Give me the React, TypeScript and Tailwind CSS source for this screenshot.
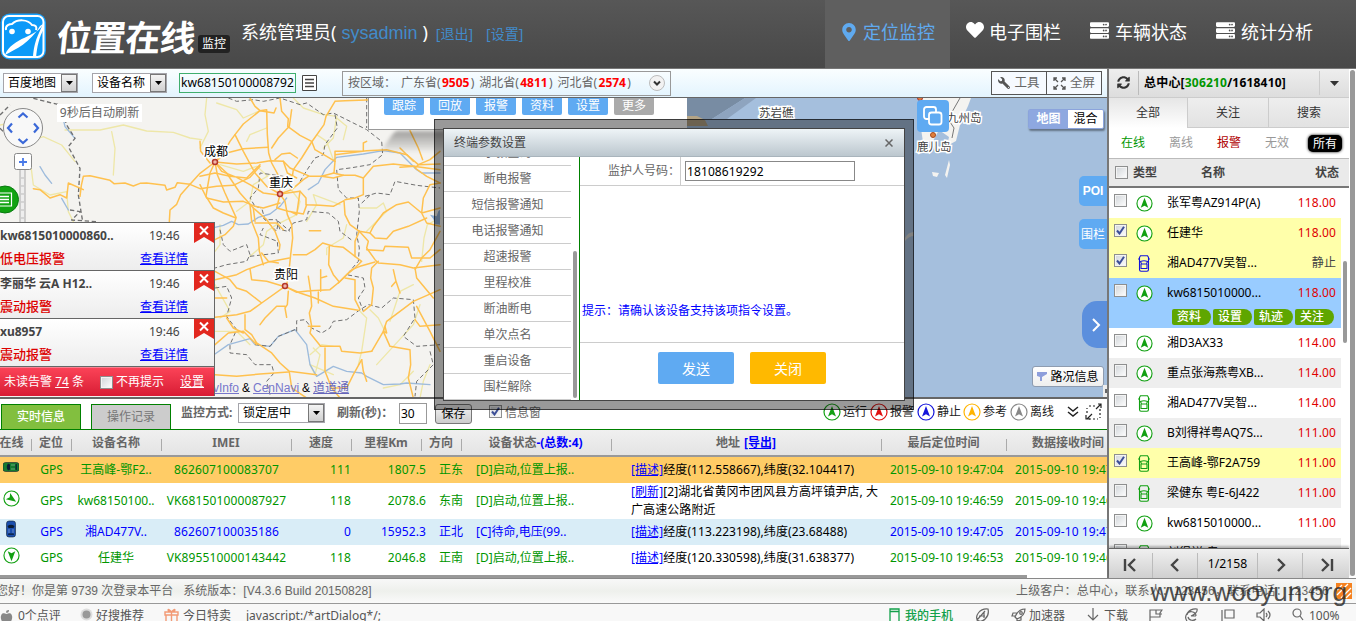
import React from "react";
import { FaMapMarkerAlt, FaHeart, FaServer, FaWrench, FaSyncAlt, FaAppleAlt } from "react-icons/fa";

const sans = "font-['Noto_Sans','Noto_Sans_CJK_SC',sans-serif]";

function DirIcon({ color, size = 17, turn = 0 }: { color: string; size?: number; turn?: number }) {
  return (
    <svg width={size} height={size} viewBox="0 0 18 18" className="block shrink-0">
      <circle cx="9" cy="9" r="8" fill="#fff" stroke={color} strokeWidth="1.2" />
      <path d="M9 3 L13 13.5 L9 11.3 L5 13.5 Z" fill={color} transform={`rotate(${turn} 9 9)`} />
    </svg>
  );
}

function CarIcon({ color }: { color: string }) {
  return (
    <svg width="12" height="17" viewBox="0 0 12 17" className="block shrink-0" fill="none" stroke={color} strokeWidth="1.1">
      <path d="M2.5 .8 h7 l1 1.7 v12 q0 1.7 -1.500 1.7 h-6 q-1.500 0 -1.500 -1.7 v-12 z" />
      <path d="M0 4h1.500M10.500 4h1.500M2.500 6.500q3.500-1.600 7 0l-1 2.500h-5zM3 9v4.500h6V9M3 13.500h6" />
    </svg>
  );
}

function Solid({ color, sideways = false }: { color: string; sideways?: boolean }) {
  return (
    <svg width="16" height="18" viewBox="0 0 16 18" className="block">
      <g transform={sideways ? "rotate(-90 8 9)" : undefined}>
        <rect x="3.500" y="1" width="9" height="16" rx="2.500" fill={color} stroke="#123" strokeWidth=".6" />
        <path d="M4.500 6q3.500-2.500 7 0l-1 2h-5zM5.500 13.500h5l.7 1.300h-6.400z" fill="#0b1c33" />
        <path d="M6 9v4M10 9v4" stroke="#fff" strokeOpacity=".5" strokeWidth=".7" />
      </g>
    </svg>
  );
}

function Check({ on = false }: { on?: boolean }) {
  return (
    <span className="flex h-[13px] w-[13px] shrink-0 items-center justify-center border border-[#8e8f8f] bg-gradient-to-br from-[#d0d4d8] to-white shadow-[inset_0_0_0_1px_#f4f4f4]">
      {on && (
        <svg width="9" height="9" viewBox="0 0 9 9" fill="none" stroke="#3c4f97" strokeWidth="2">
          <path d="M1 4.500 L3.500 7.500 L8 .8" />
        </svg>
      )}
    </span>
  );
}

function Select({ text, className = "" }: { text: string; className?: string }) {
  return (
    <div className={`flex h-5 items-center justify-between border border-[#a5a5ab] bg-white text-black ${className}`}>
      <span className="pl-1 whitespace-nowrap">{text}</span>
      <span className="flex h-[18px] w-4 items-center justify-center border border-[#777] bg-gradient-to-b from-[#f4f4f4] to-[#d0d0d0]">
        <svg width="7" height="4" viewBox="0 0 7 4"><path d="M0 0h7L3.500 4z" /></svg>
      </span>
    </div>
  );
}

function Header() {
  const nav = [
    { t: "电子围栏", i: <FaHeart size={18} />, w: "w-[125px] gap-[5px] pl-px" },
    { t: "车辆状态", i: <FaServer size={19} />, w: "w-[126px] gap-1.5" },
    { t: "统计分析", i: <FaServer size={19} />, w: "w-[125px] gap-1.5" },
  ];
  return (
    <header className="flex h-[69px] shrink-0 border-b border-[#777] bg-gradient-to-b from-[#575757] to-[#484848] text-white">
      <svg width="47" height="47" viewBox="0 0 47 47" className="mt-[13px] shrink-0">
        <rect x=".5" y=".5" width="45.500" height="46" rx="9" fill="#18a0fb" />
        <rect x="3" y="3" width="40.500" height="41" rx="6" fill="#0c9af8" stroke="#fff" strokeWidth="2" />
        <path d="M6 17c-1-5 4-6 6-6 5-5 16-5 20 1 4 0 5 2 4 5" fill="none" stroke="#fff" strokeWidth="2" />
        <circle cx="12" cy="18.500" r="2.800" fill="#fff" />
        <circle cx="28" cy="18.500" r="2.800" fill="#fff" />
        <path d="M43 11C38 24 12 24 5 42C16 36 30 30 40 13z" fill="#fff" />
        <path d="M43 10C40 20 34 26 33 45h3C37 34 39 24 44 16z" fill="#fff" />
      </svg>
      <div className="mt-[18px] ml-[9px] w-[142px] shrink-0 -skew-x-6 text-[35.500px] leading-[38px] font-bold tracking-[-1px] whitespace-nowrap">位置在线</div>
      <div className="mt-[35px] h-[18px] w-8 shrink-0 rounded-[3px] bg-[#222] text-center text-xs leading-[18px] whitespace-nowrap">监控</div>
      <div className="mt-[19px] ml-[11px] flex w-[584px] shrink-0 items-baseline text-[18px] leading-[26px] whitespace-nowrap">
        <span>系统管理员(</span>
        <span className="ml-[5px] font-['Liberation_Sans'] text-[18px] text-[#428bca]">sysadmin</span>
        <span className="ml-[5px]">)</span>
        <span className="ml-2 text-sm text-[#428bca]">[退出]</span>
        <span className="ml-[13px] text-sm text-[#428bca]">[设置]</span>
      </div>
      <nav className="flex shrink-0 text-[18px] whitespace-nowrap">
        <div className="flex w-[125px] items-center gap-[5px] bg-[#5f5f5f] pb-1 pl-[15px] text-[#5faaf0]">
          <FaMapMarkerAlt size={18} />
          <span>定位监控</span>
        </div>
        <div className="flex pl-[15px]">
          {nav.map((n) => (
            <div key={n.t} className={`flex items-center pb-1 ${n.w}`}>
              <span className="mb-1">{n.i}</span>
              <span>{n.t}</span>
            </div>
          ))}
        </div>
      </nav>
    </header>
  );
}

function Toolbar() {
  const areas = [["广东省", "9505"], ["湖北省", "4811"], ["河北省", "2574"]];
  return (
    <div className="flex h-[29px] shrink-0 items-center border-b border-[#666] bg-gradient-to-b from-[#fafeff] to-[#e3f4fe] pl-[3px] whitespace-nowrap">
      <Select text="百度地图" className="w-[75px]" />
      <Select text="设备名称" className="ml-3.5 w-[75px]" />
      <div className="ml-3 h-5 w-[117px] overflow-hidden border border-[#3fae6e] pl-px text-[12.100px] leading-[18px] text-black">kw68150100008792</div>
      <svg width="15" height="16" viewBox="0 0 15 16" className="ml-1.5" fill="none" stroke="#444">
        <path d="M.5 .5h14v15h-14z" fill="#fff" />
        <path d="M3 4.500h9M3 8h9M3 11.500h9" strokeWidth="1.600" />
      </svg>
      <div className="ml-[25px] flex h-[25px] w-[329px] items-center border border-[#999] pl-[5px] text-[#666]">
        <span className="mr-[5px] w-[48px]">按区域：</span>
        {areas.map(([n, c]) => (
          <span key={n} className="mr-[5px]">{n}(<b className="mx-[1.300px] text-[red]">{c}</b>)</span>
        ))}
        <svg width="16" height="16" viewBox="0 0 16 16" className="ml-[13px]">
          <circle cx="8" cy="8" r="7.500" fill="#f2f2f2" stroke="#bbb" />
          <path d="M5 6.500l3 3 3-3" fill="none" stroke="#333" strokeWidth="2" />
        </svg>
      </div>
      <div className="ml-auto mr-[5px] flex h-6 border border-[#555] bg-[#f6faff] text-[12.500px] text-[#666]">
        <div className="flex w-[55px] items-center justify-center gap-1 border-r border-[#555]"><FaWrench size={12} color="#555" className="-scale-x-100" />工具</div>
        <div className="flex w-[54px] items-center justify-center gap-1">
          <svg width="13" height="13" viewBox="0 0 13 13" fill="none" stroke="#555" strokeWidth="1.300">
            <path d="M1 4V1h3M9 1h3v3M12 9v3H9M4 12H1V9M1 1l4 4M12 1L8 5M12 12L8 8M1 12l4-4" />
          </svg>全屏
        </div>
      </div>
    </div>
  );
}

const roads = [
  "M-92 371L-90 336 -70 319 -58 290 -30 259 0 226 45 192",
  "M-30 259L-68 254 -75 268 -100 276 -105 262 -160 255 -180 256 -200 264 -225 255 -258 257 -270 247 -330 233 -350 235 -356 262 -360 295",
  "M-350 275L-395 255 -400 300 -420 290 -450 300 -480 275 -500 272",
  "M0 130L2 160 30 195",
  "M45 192L70 165 90 130 105 110 130 78 180 38 165 25 150 0M180 38L200 35 202 110 206 165 215 195 235 232 240 285",
  "M180 38L222 45 228 30M275 35L268 85 235 120 215 150M240 0L245 40 265 62 263 85 300 112 335 130 345 155 380 175 405 190",
  "M405 10L435 8 520 5M405 10L378 55 372 80 335 132 305 180 280 215 275 250",
  "M105 110L130 160 165 225 200 265 240 288M45 192L80 165 130 152 205 148",
  "M45 192L110 198 170 195 210 188 250 190 270 210 330 235 365 235 400 240 430 232 465 232 490 240 520 205 580 198 640 205 720 215",
  "M225 185L245 168 270 165 292 180M250 190L262 225 290 240",
  "M45 192L30 225 22 270 18 295 40 330 70 345 108 360 100 385 75 410 45 425",
  "M45 192L52 230 75 285 108 358M45 192L80 225 120 285 160 330 200 365 225 400 240 440 238 455",
  "M45 192L65 220 110 238 150 260 190 285 240 292M0 235L45 225 90 235 140 240 180 200",
  "M-30 259L0 272 50 265 100 262 150 238 180 205M0 260L20 300 70 312 130 310 165 325 190 330 240 315",
  "M150 320L155 370 175 420 178 460 190 500M165 375L230 375 250 395M160 330L165 370",
  "M240 288L255 310 262 350 275 380 278 420 272 470 268 510 260 560",
  "M240 288L300 280 318 300 318 320 360 322 400 325 432 308 435 350 450 380 478 400",
  "M240 288L275 275 310 245 325 235M240 290L230 330 265 340 310 348 320 320M300 280L290 350 270 340",
  "M405 190L405 160 490 160 490 135 500 130M405 170L500 158 560 155 620 170 655 200 720 198M405 190L402 225 365 235",
  "M600 150L640 190M630 98L655 150 668 185M720 160L690 185 655 200 645 210 680 235 720 255",
  "M490 240L490 290 465 300 435 305M400 225L430 232M645 205L600 208",
  "M510 405L520 385 550 345 590 320 625 312 665 345 720 330M665 345L670 300 690 260 720 255M665 345L680 375 720 385",
  "M328 398L362 398M478 400L510 405 525 420 560 422 580 400 625 385 680 360",
  "M280 470L320 470 345 455 368 435 400 445 430 448 465 475M268 480L205 492 140 515 110 530 45 545",
  "M235 495L205 490 185 465M478 400L465 430 465 475 485 490 465 510 440 530 415 555",
  "M388 445L386 500 400 530 418 552M478 400L505 430 500 450 525 485 535 495 600 500 640 510 720 500",
  "M500 455L550 458 555 445 625 448 635 480 690 480 720 455M535 490L515 510 512 540 520 570 515 620 490 640",
  "M255 565L185 615 150 640 110 650 45 658M185 615L140 580 110 570 90 545 45 520M150 512L155 545 200 550 250 565",
  "M255 565L300 585 345 600 400 625 475 637M265 580L262 620 255 630 260 658M255 625L230 625 195 660 180 680",
  "M255 565L290 583 330 578 390 575 418 552 455 515 480 505 525 492M325 535L332 580 335 625 328 645 335 685 330 705 362 745",
  "M362 515L362 580M362 540L380 535M355 582L355 615M325 685L360 685M435 540L465 545 465 605 480 635",
  "M580 515L588 550 575 565M588 550L600 585",
  "M135 650L135 695 155 710 170 735 215 765 240 795 268 820 350 830M45 740L85 705 130 700 170 740M45 600L80 600M80 660L100 690 130 705",
  "M45 830L110 835 180 828 265 822M268 822L275 870 320 900M362 745L420 745 425 760 480 765 515 760",
  "M375 750L375 820 395 870 420 900M485 785L460 830 440 870 400 870",
  "M515 760L550 700 560 670 600 640 640 610 720 575M550 700L570 745 630 755 632 800 625 840 640 900",
  "M550 700L560 705 555 685M645 510L650 540 700 600M650 625L690 700 720 760M645 515L665 480 690 455 720 400",
  "M720 680L660 685 645 665M485 785L490 820 500 850",
];

function MapArt() {
  return (
    <svg width="1107" height="299" viewBox="0 98 1107 299" className="block">
      <rect y="98" width="1107" height="299" fill="#f4f3f0" />
      <g transform="translate(200 98) scale(.33333)" fill="none" strokeLinejoin="round" strokeLinecap="round">
        <g stroke="#eee7a8" strokeWidth="4">
          <path d="M-405 96L-300 96 -230 81 -160 99 -80 103 -30 120 5 125M-265 101L-255 151 -260 231M-540 141L-470 116 -415 141 -375 191M-510 181L-500 261 -450 291 -400 281 -395 341 -375 381M-600 81L-540 71 -480 111" />
          <path d="M20 0L15 50 25 100 0 150M50 15L110 35 130 60 175 40M200 90L150 110 140 130M280 0L310 30 370 50 410 55 400 120 370 150M350 110L380 130 400 185" />
          <path d="M60 200L130 220 170 205 220 250M210 230L160 260 150 310 110 340M270 270L300 310 290 350 230 380M320 370L350 320 340 290 420 320M410 60L440 85 430 125M480 330L530 330 550 315 560 340 500 400" />
          <path d="M665 490L672 420 682 380 720 360M510 635L535 660 555 700M440 380L430 420 380 450 380 470M480 640L500 660 485 760 475 800M660 620L640 680 530 800M230 380L200 400 190 440 150 475M60 380L60 440 45 460" />
          <path d="M340 750L360 770 345 830 330 800 400 830M330 770L365 740 400 745M640 560L600 580 570 670M640 820L600 860 550 870M690 800L670 850 660 900M45 560L90 640 60 660M45 700L110 700 150 740" />
        </g>
        <g stroke="#9dbbdc" strokeWidth="4">
          <path d="M-480 206L-465 231 -445 256M-420 21L-405 86 -375 121M-415 301L-395 336M45 388L70 382 95 370 115 380 145 378 175 358 210 348 240 325 260 300M325 275L355 255 375 215 410 178 490 168 550 158 600 165 650 215 665 225 720 225" />
          <path d="M45 768L85 740 120 730 150 722 165 740 210 745 235 715 285 695 320 740 330 800 350 835 400 805 440 820 485 825 500 835 550 860 600 858 620 855 690 860" />
        </g>
        <g stroke="#6f6f6f" strokeWidth="3" strokeDasharray="13 8" strokeLinecap="butt">
          <path d="M-500 1L-420 21 -400 81 -375 121 -395 146 -360 211 -365 291 -352 371M-390 336L-360 341 -385 366 -310 371M-600 91L-580 111M-600 51L-570 21" strokeWidth="4" />
          <path d="M85 0L110 10 160 5 190 10 240 0 300 20 320 15 370 50 400 45 500 95 545 130 548 170 510 200 450 210 410 215 415 275 440 300 475 300 478 340 470 410 478 450 475 490 440 530 490 540 495 570 475 600 490 640" />
          <path d="M405 50L412 90 375 140 370 170 345 180 325 210 300 250M250 235L180 225 175 270 150 300 165 325 185 330 195 365 230 365 240 395 265 400 280 375 320 365 325 340 385 345 415 370 420 400 460 430M190 360L230 400 235 370 270 400" />
          <path d="M500 0L500 90M495 295L530 285 570 290 585 250 650 262 720 270M510 292L480 320M60 395L70 440 90 460 140 440 150 470 140 490 80 500 45 510M150 475L235 465 232 430 180 410 190 390" />
          <path d="M45 570L80 565 95 600 80 655 110 695 90 740 90 765 140 770 165 800 215 800 222 825 200 850 210 890M290 700L290 668 315 665 335 690 365 705 390 690 400 670 440 665 480 635 505 620 545 630 580 600 640 605 645 660 610 715 650 745 720 740M690 760L700 800 650 850 645 895M165 740L210 745 235 715 285 695" />
        </g>
        <g stroke="#ffc14f" strokeWidth="4.500">
          {roads.map((d) => <path key={d} d={d} />)}
        </g>
        <path d="M690 350l20 5 5-15 5 -5v45l-15-2-5-15z" fill="#8fb0d8" />
      </g>
      <path d="M687 98H1107V397H500L687 125z" fill="#a5bfdd" />
      <path d="M687 98H745L712 119H687z" fill="#788ca3" />
      <path d="M745 98H756L727 119H712z" fill="#8ea4bf" />
      <path d="M687 116l10 0 8 4 3 6H687z" fill="#b4a486" />
      <path d="M905 238q3-6 9-6v4q-5 0-9 5z" fill="#d8d8d6" />
      <path d="M919 98h52l-3 8-7 15-5 20-9 5 2-9-10-7-6 11-10 1-3-20z" fill="#f4f3f0" />
      <path d="M949 160l1 5-3 13-2-3z M932 172l7 1-2 4-4-1z" fill="#f4f3f0" />
      <path d="M950 122l4 6-2 10M960 98l-8 14" fill="none" stroke="#777" strokeWidth="1" />
      <circle cx="920" cy="98" r="2.500" fill="#e0803c" stroke="#a33" />
      <circle cx="933" cy="135" r="2.500" fill="#e0803c" stroke="#a54a20" />
      {[[215, 162], [280, 194], [285, 286]].map(([x, y]) => (
        <circle key={x} cx={x} cy={y} r="2.500" fill="#f0b5aa" stroke="#b5382b" strokeWidth="1.500" />
      ))}
      <g fontFamily="Noto Sans CJK SC" fontSize="12" fill="#000" stroke="#fff" strokeWidth="3" paintOrder="stroke">
        <text x="204" y="156">成都</text>
        <text x="269" y="187">重庆</text>
        <text x="274" y="279">贵阳</text>
        <g fill="#444" fontSize="11.500">
          <text x="759" y="117">苏岩礁</text>
          <text x="947" y="122">九州岛</text>
          <text x="917" y="151">鹿儿岛</text>
        </g>
      </g>
    </svg>
  );
}

function Alerts() {
  const items = [["kw6815010000860..", "低电压报警"], ["李丽华 云A H12..", "震动报警"], ["xu8957", "震动报警"]];
  return (
    <div className="absolute top-[124px] left-0 w-[215px] border-t border-r border-[#666]">
      {items.map(([n, a]) => (
        <div key={n} className="h-12 border-b border-[#666] bg-gradient-to-b from-white to-[#ededed]">
          <div className="flex h-6 text-[#444]">
            <b className="w-[149px] leading-[25px] whitespace-nowrap">{n}</b>
            <span className="leading-[25px]">19:46</span>
            <svg width="20" height="20" viewBox="0 0 20 20" className="ml-auto">
              <path d="M0 0h20v20l-10-6-10 6z" fill="#e2281f" />
              <path d="M6 3.500l8 8M14 3.500l-8 8" stroke="#fff" strokeWidth="2" />
            </svg>
          </div>
          <div className="flex h-6 items-center">
            <span className="w-[140px] text-[13px] font-medium text-[#d00]">{a}</span>
            <span className="text-[blue] underline">查看详情</span>
          </div>
        </div>
      ))}
      <div className="flex h-[29px] items-center border-t border-[#fb8090] bg-gradient-to-b from-[#fb4257] to-[#d81a34] pl-1 whitespace-nowrap text-white">
        <span className="w-24">未读告警 <u>74</u> 条</span>
        <Check />
        <span className="ml-[3px] w-16">不再提示</span>
        <u>设置</u>
      </div>
    </div>
  );
}

function MapPanel() {
  return (
    <div className="relative h-[301px] shrink-0 overflow-hidden border-b-2 border-[#666]">
      <MapArt />
      <div className="absolute top-[6px] left-[57px] h-[18px] w-[85px] bg-white text-center text-[12.100px] leading-[18px] whitespace-nowrap text-[#666]">9秒后自动刷新</div>
      <svg width="45" height="128" viewBox="0 0 45 128" className="absolute top-0 left-0" fill="none">
        <path d="M20 70h5v58h-5z" fill="#eee" stroke="#aaa" />
        <path d="M21 80h3M21 88h3M21 96h3M21 104h3M21 112h3M21 120h3" stroke="#bbb" />
        <circle cx="23" cy="30" r="19.500" fill="#f8f8f8" stroke="#888" />
        <path d="M18.500 19.500l4.500-4 4.500 4M18.500 41l4.500 4 4.500-4M12 25.500l-4 4.500 4 4.500M34 25.500l4 4.500-4 4.500" stroke="#3a68d8" strokeWidth="2.200" />
        <rect x="14.500" y="55.500" width="17" height="16" rx="2" fill="#fff" stroke="#888" />
        <path d="M19 64h8M23 60v8" stroke="#4a7ae8" strokeWidth="1.800" />
        <circle cx="5" cy="101.500" r="13.500" fill="#12a312" stroke="#087a10" />
        <path d="M0 95h11.500v13H0" stroke="#fff" strokeWidth="1.200" />
        <path d="M0 98.500h9M0 101.500h9M0 104.500h9" stroke="#fff" strokeWidth="1.300" />
      </svg>
      <div className="absolute top-[33px] left-[388px] h-5 w-[310px] skew-x-[-35deg] bg-gradient-to-b from-black/35 to-black/5 blur-[2px]" />
      <div className="absolute top-0 left-[368px] flex h-[32px] w-[319px] gap-1.5 border-b border-l border-[#999] bg-white pl-[15px] text-white">
        {["跟踪", "回放", "报警", "资料", "设置", "更多"].map((t, i) => (
          <span key={t} className={`h-[17px] w-10 rounded-b-[2px] text-center leading-[15px] ${i === 5 ? "bg-[#aaa]" : "bg-[#5faaf2]"}`}>{t}</span>
        ))}
      </div>
      <div className="absolute top-[281px] left-[213px] flex gap-[3px] font-['Liberation_Sans','Noto_Sans_CJK_SC'] text-[12px] leading-[18px] whitespace-nowrap text-black">
        <u className="text-[#77c]">vInfo</u>&amp;<u className="text-[#77c]">CenNavi</u>&amp;<u className="text-[#66b]">道道通</u>
      </div>
      <Alerts />
      <div className="absolute top-[2px] left-[917px] flex h-8 w-8 items-center justify-center rounded-[4px] bg-[#5faaf2]">
        <svg width="20" height="20" viewBox="0 0 20 20" stroke="#fff" strokeWidth="1.800" fill="none">
          <rect x="1" y="1" width="12" height="12" rx="2.500" />
          <rect x="6" y="6.500" width="12.500" height="12" rx="2.500" fill="#5faaf2" />
        </svg>
      </div>
      <div className="absolute top-[11px] left-[1028px] flex h-5 w-[76px] rounded-[2px] border border-[#8ba4dc] bg-white leading-[18px] shadow-[1px_2px_2px_#0006]">
        <b className="w-[39px] bg-[#8ea8e0] text-center text-white">地图</b>
        <span className="flex-1 text-center text-black">混合</span>
      </div>
      <div className="absolute top-[78px] right-0 h-[30px] w-7 rounded-l-[5px] bg-[#5faaf2] text-center font-['Liberation_Sans'] text-[12px] leading-[31px] font-bold text-white">POI</div>
      <div className="absolute top-[121px] right-0 h-[30px] w-7 rounded-l-[5px] bg-[#5faaf2] text-center leading-[31px] whitespace-nowrap text-white">围栏</div>
      <div className="absolute top-[203px] right-0 flex h-[47px] w-[25px] items-center justify-center rounded-l-[15px] bg-[#5b8fdd] pl-[3px]">
        <svg width="9" height="14" viewBox="0 0 9 14" fill="none" stroke="#fff" strokeWidth="2"><path d="M1 1l6 6-6 6" /></svg>
      </div>
      <div className="absolute top-[268px] left-[1032px] flex h-[21px] w-[72px] items-center justify-center gap-[3px] rounded-[3px] border border-[#8e9cb0] bg-gradient-to-b from-white to-[#eee] whitespace-nowrap text-black">
        <svg width="10" height="9" viewBox="0 0 10 9" fill="#8d9edb"><path d="M0 0h10v2L5 5v4H3V5L0 4z" /></svg>路况信息
      </div>
      <div className="absolute right-0 bottom-0 flex h-3 w-1 items-center bg-[#eee]"><span className="ml-0.5 h-1 w-0.5 bg-[#666]" /></div>
    </div>
  );
}

function Controls() {
  const legend = [["运行", "#12a012", "w-[47px]"], ["报警", "#e01010", "w-[47px]"], ["静止", "#1414dc", "w-[46px]"], ["参考", "#ffb400", "w-[47px]"], ["离线", "#888", "w-[48px]"]];
  return (
    <div className="flex h-[31px] shrink-0 items-start border-b border-[green] bg-white pl-px whitespace-nowrap">
      <div className="mt-[5px] h-[25px] w-20 border border-b-0 border-[green] bg-[#82bf3f] text-center leading-6 font-medium text-white">实时信息</div>
      <div className="mt-[5px] ml-2.5 h-[25px] w-20 border border-b-0 border-[green] bg-[#ccc] text-center leading-6 text-[#777]">操作记录</div>
      <b className="mt-1 ml-[10px] w-[57px] leading-5 font-bold text-[#666]">监控方式:</b>
      <Select text="锁定居中" className="mt-1 w-[87px]" />
      <b className="mt-1 ml-[12px] w-[62px] leading-5 text-[#666]">刷新(秒)：</b>
      <div className="mt-1 h-[21px] w-7 border border-[#999] pl-px leading-[19px] text-black">30</div>
      <div className="mt-[5px] ml-2 h-5 w-[37px] rounded-[3px] border border-[#777] bg-gradient-to-b from-[#f4f4f4] to-[#ccc] text-center leading-[18px] text-black">保存</div>
      <div className="mt-1.5 ml-[17px] flex items-start gap-[3px] text-[#666]"><Check on /><span className="leading-4">信息窗</span></div>
      <div className="mt-[3px] mr-1 ml-auto flex text-[#222]">
        {legend.map(([t, c, w]) => (
          <div key={t} className={`flex items-center gap-[2px] leading-5 ${w}`}><DirIcon color={c} size={18} />{t}</div>
        ))}
        <svg width="38" height="20" viewBox="0 0 38 20" fill="none" stroke="#222" strokeWidth="1.500" className="ml-[7px]">
          <path d="M3 5l5 4 5-4M3 10l5 4 5-4" />
          <path d="M24 4h8M35 7v9M22 11V6M24 17h9" strokeWidth="1.200" strokeDasharray="2 2" />
          <path d="M31 7l5-5M33 2h3v4M27 12l-5 5M21 13v4h4" strokeWidth="1.200" />
        </svg>
      </div>
    </div>
  );
}

function Table() {
  const G = "text-[#009600]";
  const B = "text-[blue]";
  const rows = [
    { ic: <Solid color="#167a30" sideways />, n: "王高峰-鄂F2..", im: "862607100083707", s: "111", k: "1807.5", d: "正东", st: "[D]启动,位置上报..", l: "[描述]", a: "经度(112.558667),纬度(32.104417)", t: "2015-09-10 19:47:04", c: `${G} bg-[#ffcc66] h-[26px]` },
    { ic: <DirIcon color="#12a012" turn={125} />, n: "kw68150100..", im: "VK681501000087927", s: "118", k: "2078.6", d: "东南", st: "[D]启动,位置上报..", l: "[刷新]", a: "[2]湖北省黄冈市团风县方高坪镇尹店, 大广高速公路附近", t: "2015-09-10 19:46:59", c: `${G} bg-white h-9` },
    { ic: <Solid color="#1c4fae" />, n: "湘AD477V..", im: "862607100035186", s: "0", k: "15952.3", d: "正北", st: "[C]待命,电压(99..", l: "[描述]", a: "经度(113.223198),纬度(23.68488)", t: "2015-09-10 19:47:05", c: `${B} bg-[#d9edf7] h-[26px]` },
    { ic: <DirIcon color="#12a012" turn={180} />, n: "任建华", im: "VK895510000143442", s: "118", k: "2046.8", d: "正南", st: "[D]启动,位置上报..", l: "[描述]", a: "经度(120.330598),纬度(31.638377)", t: "2015-09-10 19:46:53", c: `${G} bg-white h-[26px]` },
  ];
  const heads = ["在线", "定位", "设备名称", "IMEI", "速度", "里程Km", "方向"];
  const sep = "relative flex h-full items-center justify-center after:absolute after:right-0 after:top-[9px] after:h-3 after:w-px after:bg-[#aaa]";
  return (
    <div className="h-[148px] shrink-0 overflow-hidden bg-white whitespace-nowrap">
      <div className="grid h-[27px] grid-cols-[32px_40px_90px_130px_60px_70px_40px_150px_270px_125px_102px] items-center border-b-2 border-[#999] bg-gradient-to-b from-[#f0f0f0] to-[#e4e4e4] font-bold text-[#666]">
        {heads.map((h, i) => <div key={h} className={`${sep} ${i === 0 ? "-ml-[9px]" : "pr-0.5"}`}>{h}</div>)}
        <div className={`${sep} pr-[3px]`}>设备状态<span className="text-[blue]">-(总数:4)</span></div>
        <div className={`${sep} pr-0.5`}>地址&nbsp;<u className="ml-px text-[blue]">[导出]</u></div>
        <div className={`${sep} pr-0.5`}>最后定位时间</div>
        <div className="pl-[25px]">数据接收时间</div>
      </div>
      {rows.map((r) => (
        <div key={r.im} className={`grid grid-cols-[32px_39px_91px_131px_58px_75px_50px_155px_259px_125px_92px] items-center overflow-hidden ${r.c}`}>
          <span className="-mt-1.5 pl-[3px]">{r.ic}</span>
          <span className="text-center">GPS</span>
          <span className="-ml-px text-center">{r.n}</span>
          <span className="-ml-0.5 text-center tracking-[.12px]">{r.im}</span>
          <span className="text-right tracking-[.1px]">{r.s}</span>
          <span className="text-right tracking-[.1px]">{r.k}</span>
          <span className="text-center">{r.d}</span>
          <span>{r.st}</span>
          <span className="w-[250px] leading-[18px] tracking-[.08px] whitespace-normal text-black"><u className="text-[blue]">{r.l}</u>{r.a}</span>
          <span>{r.t}</span>
          <span className="overflow-hidden tracking-[.1px]">{r.t}</span>
        </div>
      ))}
      <div className="mt-1 h-[3px] w-[1027px] bg-[#999]" />
    </div>
  );
}

function Sidebar() {
  type R = [string, string, number, "a" | "g" | "b", string];
  const rows: R[] = [
    ["张军粤AZ914P(A)", "118.00", 0, "a", "bg-white"],
    ["任建华", "118.00", 1, "a", "bg-[#ffffaa]"],
    ["湘AD477V吴智...", "静止", 1, "b", "bg-[#ffffaa]"],
    ["kw6815010000...", "118.00", 0, "a", "bg-[#99ccff]"],
    ["湘D3AX33", "114.00", 0, "a", "bg-white"],
    ["重点张海燕粤XB...", "114.00", 0, "a", "bg-[#eee]"],
    ["湘AD477V吴智...", "114.00", 0, "g", "bg-white"],
    ["B刘得祥粤AQ7S...", "111.00", 0, "a", "bg-[#eee]"],
    ["王高峰-鄂F2A759", "111.00", 1, "g", "bg-[#ffffaa]"],
    ["梁健东 粤E-6J422", "111.00", 0, "g", "bg-[#eee]"],
    ["kw6815010000...", "111.00", 0, "a", "bg-white"],
    ["刘得祥-粤A·R7S...", "111.00", 0, "g", "bg-[#eee]"],
  ];
  const pager = ["M2 1v12M12 1l-6 6 6 6", "M10 1l-6 6 6 6", "", "M5 1l6 6-6 6", "M3 1l6 6-6 6M13 1v12"];
  return (
    <aside className="flex h-[509px] w-[247px] shrink-0 bg-white whitespace-nowrap">
      <div className="flex w-60 shrink-0 flex-col">
        <div className="flex h-[29px] shrink-0 items-center border-b border-[#ccc] bg-gradient-to-b from-[#eee] to-[#ddd] text-black">
          <span className="flex h-6 w-[30px] items-center justify-center border-r border-[#bbb] pb-0.5"><FaSyncAlt size={13} color="#333" /></span>
          <b className="ml-[5px] w-[175px] tracking-[.2px]">总中心[<span className="text-[#009600]">306210</span>/1618410]</b>
          <span className="flex h-6 flex-1 items-center justify-center border-l border-[#ccc]"><svg width="9" height="5"><path d="M0 0h9L4.500 5z" fill="#333" /></svg></span>
        </div>
        <div className="grid h-[30px] shrink-0 grid-cols-[78px_81px_81px] text-center leading-[29px] text-[#333]">
          <span className="bg-gradient-to-b from-[#e6e6e6] to-white">全部</span>
          <span className="border-b border-l border-[#ccc] bg-gradient-to-b from-[#eee] to-[#e2e2e2]">关注</span>
          <span className="border-b border-l border-[#ccc] bg-gradient-to-b from-[#eee] to-[#e2e2e2]">搜索</span>
        </div>
        <div className="flex h-[30px] shrink-0 items-center pl-3 leading-5">
          <span className="w-12 text-[#009600]">在线</span><span className="w-12 text-[#999]">离线</span><span className="w-12 text-[#b00000]">报警</span><span className="w-[43px] text-[#999]">无效</span>
          <span className="h-[17px] w-[34px] rounded-[5px] bg-black text-center leading-[17px] text-white shadow-[0_0_3px_#000]">所有</span>
        </div>
        <div className="flex h-[30px] shrink-0 items-center border-t border-b-2 border-[#bbb] border-b-[#777] bg-[#eaeaea] pl-1.5 font-bold text-[#444]">
          <Check /><span className="ml-[5px] w-[68px]">类型</span><span className="w-[114px]">名称</span><span>状态</span>
        </div>
        <div className="flex h-[360px] shrink-0 overflow-hidden">
          <div className="w-[232px] shrink-0">
            {rows.map(([n, s, c, k, bg], i) => (
              <div key={i} className={bg}>
                <div className="flex h-[30px] items-start pl-[5px] leading-[30px]">
                  <span className="mt-1.5"><Check on={!!c} /></span>
                  <span className="mt-[7px] flex w-[34px] justify-center">{k === "a" ? <DirIcon color="#12a012" /> : <CarIcon color={k === "g" ? "#12a012" : "#1414dc"} />}</span>
                  <span className="ml-1.5 text-[12px] text-black">{n}</span>
                  <span className={`ml-auto pr-[5px] tracking-[.1px] ${k === "b" ? "text-[#444]" : "text-[#e00000]"}`}>{s}</span>
                </div>
                {i === 3 && (
                  <div className="flex h-5 gap-0.5 pt-px pl-[63px]">
                    {["资料", "设置", "轨迹", "关注"].map((t) => (
                      <span key={t} className="h-4 w-[39px] rounded-l-[2px] rounded-r-[8px] bg-[#5fa600] pl-[5px] leading-[15px] font-medium text-white">{t}</span>
                    ))}
                  </div>
                )}
              </div>
            ))}
          </div>
          <div className="mt-[73px] ml-[2px] h-[82px] w-1 rounded bg-[#999]" />
        </div>
        <div className="grid h-[30px] shrink-0 grid-cols-[44px_45px_60px_45px_46px] border-t border-[#666] bg-gradient-to-b from-[#f0f0f0] to-[#d0d0d0] shadow-[0_-2px_2px_#0004]">
          {pager.map((d, i) => (
            <span key={i} className="mt-1 flex items-center justify-center border-r border-[#bbb] pb-0.5 text-[12.200px] text-black last:border-r-0">
              {d ? <svg width="15" height="14" viewBox="0 0 15 14" fill="none" stroke="#444" strokeWidth="2.400"><path d={d} /></svg> : "1/2158"}
            </span>
          ))}
        </div>
      </div>
      <div className="mt-px ml-[1px] h-[506px] w-[5px] rounded bg-[#999]" />
    </aside>
  );
}

function Dialog() {
  const items = ["求救查询", "断电报警", "短信报警通知", "电话报警通知", "超速报警", "里程校准", "断油断电", "单次点名", "重启设备", "围栏解除"];
  return (
    <div className="absolute top-[119px] left-[434px] h-[291px] w-[480px] border border-black/60 bg-black/40 p-2 whitespace-nowrap">
      <div className="flex h-[273px] w-[462px] flex-col border border-[#444] bg-white text-[#666]">
        <div className="flex h-7 shrink-0 items-center justify-between border-b border-[#a9b4bc] bg-gradient-to-b from-[#eef4f7] to-[#bcc7ce] pr-[11px] pl-[10px] text-[#444]">
          <span>终端参数设置</span>
          <svg width="8" height="8" viewBox="0 0 8 8" stroke="#666" strokeWidth="1.500"><path d="M.5 .5l7 7M7.500 .5l-7 7" /></svg>
        </div>
        <div className="flex min-h-0 flex-1">
          <div className="flex w-[127px] shrink-0 flex-col justify-end overflow-hidden">
            {items.map((t) => (
              <div key={t} className="h-[26px] shrink-0 border-b border-[#ccc] text-center leading-[26px]">{t}</div>
            ))}
          </div>
          <div className="mt-[94px] ml-[2px] h-[147px] w-1 shrink-0 rounded bg-[#999]" />
          <div className="ml-[2px] flex flex-1 flex-col border-l border-[green]">
            <div className="flex h-[29px] shrink-0 items-center border-b border-[#ccc]">
              <span className="h-7 w-[101px] border-r border-[#ccc] text-right leading-7">监护人号码：</span>
              <span className="ml-1 h-5 w-[170px] border border-[#888] pl-px leading-[19px] tracking-[.1px] text-black">18108619292</span>
            </div>
            <div className="flex h-[157px] shrink-0 items-end border-b border-[#ccc] pb-[21px] pl-[2px] leading-5 text-[blue]">提示：请确认该设备支持该项指令设置。</div>
            <div className="flex gap-4 pt-[9px] pl-[78px] text-center text-sm leading-[33px] text-white">
              <span className="h-8 w-[76px] rounded-[2px] bg-[#5faaf2]">发送</span>
              <span className="h-8 w-[76px] rounded-[2px] bg-[#ffb900]">关闭</span>
            </div>
          </div>
        </div>
      </div>
    </div>
  );
}

function Footer() {
  const p = { fill: "none", stroke: "#666", strokeWidth: 1.2 };
  return (
    <div className="relative shrink-0 whitespace-nowrap">
      <div className="flex h-[25px] items-center justify-between border-t border-[#888] bg-gradient-to-b from-[#f8f8f8] via-[#eef0ec] to-[#fafafa] pr-1 pb-px text-[#666]">
        <span className="-ml-1 font-['Liberation_Sans','Noto_Sans_CJK_SC']">您好！你是第 9739 次登录本平台&nbsp;&nbsp; 系统版本：[V4.3.6 Build 20150828]</span>
        <div className="flex w-[336px] items-center justify-between font-['Liberation_Sans','Noto_Sans_CJK_SC']">
          <span className="tracking-[.15px]">上级客户：总中心，联系人：123456，联系电话：123456</span>
          <svg width="16" height="16" viewBox="0 0 16 16"><rect width="16" height="16" fill="#f58220" /><path d="M1 12L12 1M5 15L15 5M1 7l5-5M10 15l5-5" stroke="#fff" strokeWidth="1.300" /></svg>
        </div>
      </div>
      <div className="flex h-[18px] items-start overflow-hidden border-t border-[#999] bg-[#f8f8f8] leading-[23px] text-[#555]">
        <FaAppleAlt size={13} color="#888" className="mt-1.5" /><span className="ml-[5px] w-[62px]">0个点评</span>
        <svg width="13" height="13" className="mt-1"><circle cx="6.500" cy="6.500" r="6" fill="#ddd" /><circle cx="6.500" cy="6.500" r="4" fill="#999" /></svg>
        <span className="ml-[3px] w-[68px]">好搜推荐</span>
        <svg width="15" height="15" viewBox="0 0 15 15" className="mt-1 shrink-0" fill="none" stroke="#f29a75" strokeWidth="1.400"><path d="M1 4h13v3H1zM2 7v8h11V7M7.500 4v11M7.500 4C2 3 4-1 7.500 4 11-1 13 3 7.500 4" /></svg>
        <span className="ml-1 w-[63px]">今日特卖</span>
        <span className="text-[12px]">javascript:/*artDialog*/;</span>
        <div className="ml-auto flex w-[467px] items-start">
          <svg width="11" height="16" className="mt-1" fill="none" stroke="#12a04a" strokeWidth="1.300"><path d="M1 1h9v13H1zM1 3.500h9" /></svg>
          <span className="ml-[5px] w-[70px] font-medium text-[#12a04a]">我的手机</span>
          <svg width="14" height="14" viewBox="0 0 14 14" className="mt-1" {...p}><path d="M3 13C-1 8 5 0 13 1c2 8-6 15-11 11L10 3M4 8h6M9 4v6" /></svg>
          <svg width="15" height="14" viewBox="0 0 15 14" className="ml-[22px] mt-1" {...p}><path d="M4 9C6 4 9 1 14 1c0 5-3 8-8 10zM6 5H2L1 8h3M10 9v3l-4 1v-3" /><circle cx="10" cy="5" r="1.300" /></svg>
          <span className="ml-[3px] w-[57px]">加速器</span>
          <svg width="14" height="14" viewBox="0 0 14 14" className="mt-1" {...p}><path d="M7 0v12M2 7l5 5 5-5" /></svg>
          <span className="ml-1 w-[45px]">下载</span>
          <svg width="14" height="14" viewBox="0 0 14 14" className="mt-1" {...p}><path d="M1 14V2h12l-2 3v4H1M7 2v4h6" /></svg>
          <svg width="15" height="14" viewBox="0 0 15 14" className="ml-[21px] mt-1" {...p}><path d="M3 13C-1 8 5 0 13 1c1 3-3 6-6 7h5M3 7c1-5 9-4 9 1M4 9c1 4 6 4 8 2" /></svg>
          <svg width="14" height="14" viewBox="0 0 14 14" className="ml-[22px] mt-1" {...p}><path d="M4 2h9v8H4zM1 2v12" /></svg>
          <svg width="16" height="14" viewBox="0 0 16 14" className="ml-[21px] mt-1" {...p}><path d="M1 5h3l4-4v12L4 9H1zM10 5q2 2 0 4M12 3q4 4 0 8" /></svg>
          <svg width="12" height="13" viewBox="0 0 12 13" className="ml-5 mt-1" {...p}><circle cx="5" cy="5" r="4" /><path d="M8 8l3 4" /></svg>
          <span className="ml-[5px]">100%</span>
        </div>
      </div>
      <div className="absolute top-[-2px] right-[9px] font-['Liberation_Sans'] text-[26px] leading-8 text-[#222]/80">www.wooyun.org</div>
    </div>
  );
}

export default function App() {
  return (
    <div className={`relative flex h-[621px] w-[1356px] flex-col overflow-hidden bg-white text-xs ${sans}`}>
      <Header />
      <div className="flex shrink-0">
        <main className="flex h-[509px] w-[1109px] shrink-0 flex-col border-r-2 border-[#777]">
          <Toolbar />
          <MapPanel />
          <Controls />
          <Table />
        </main>
        <Sidebar />
      </div>
      <Footer />
      <Dialog />
    </div>
  );
}
